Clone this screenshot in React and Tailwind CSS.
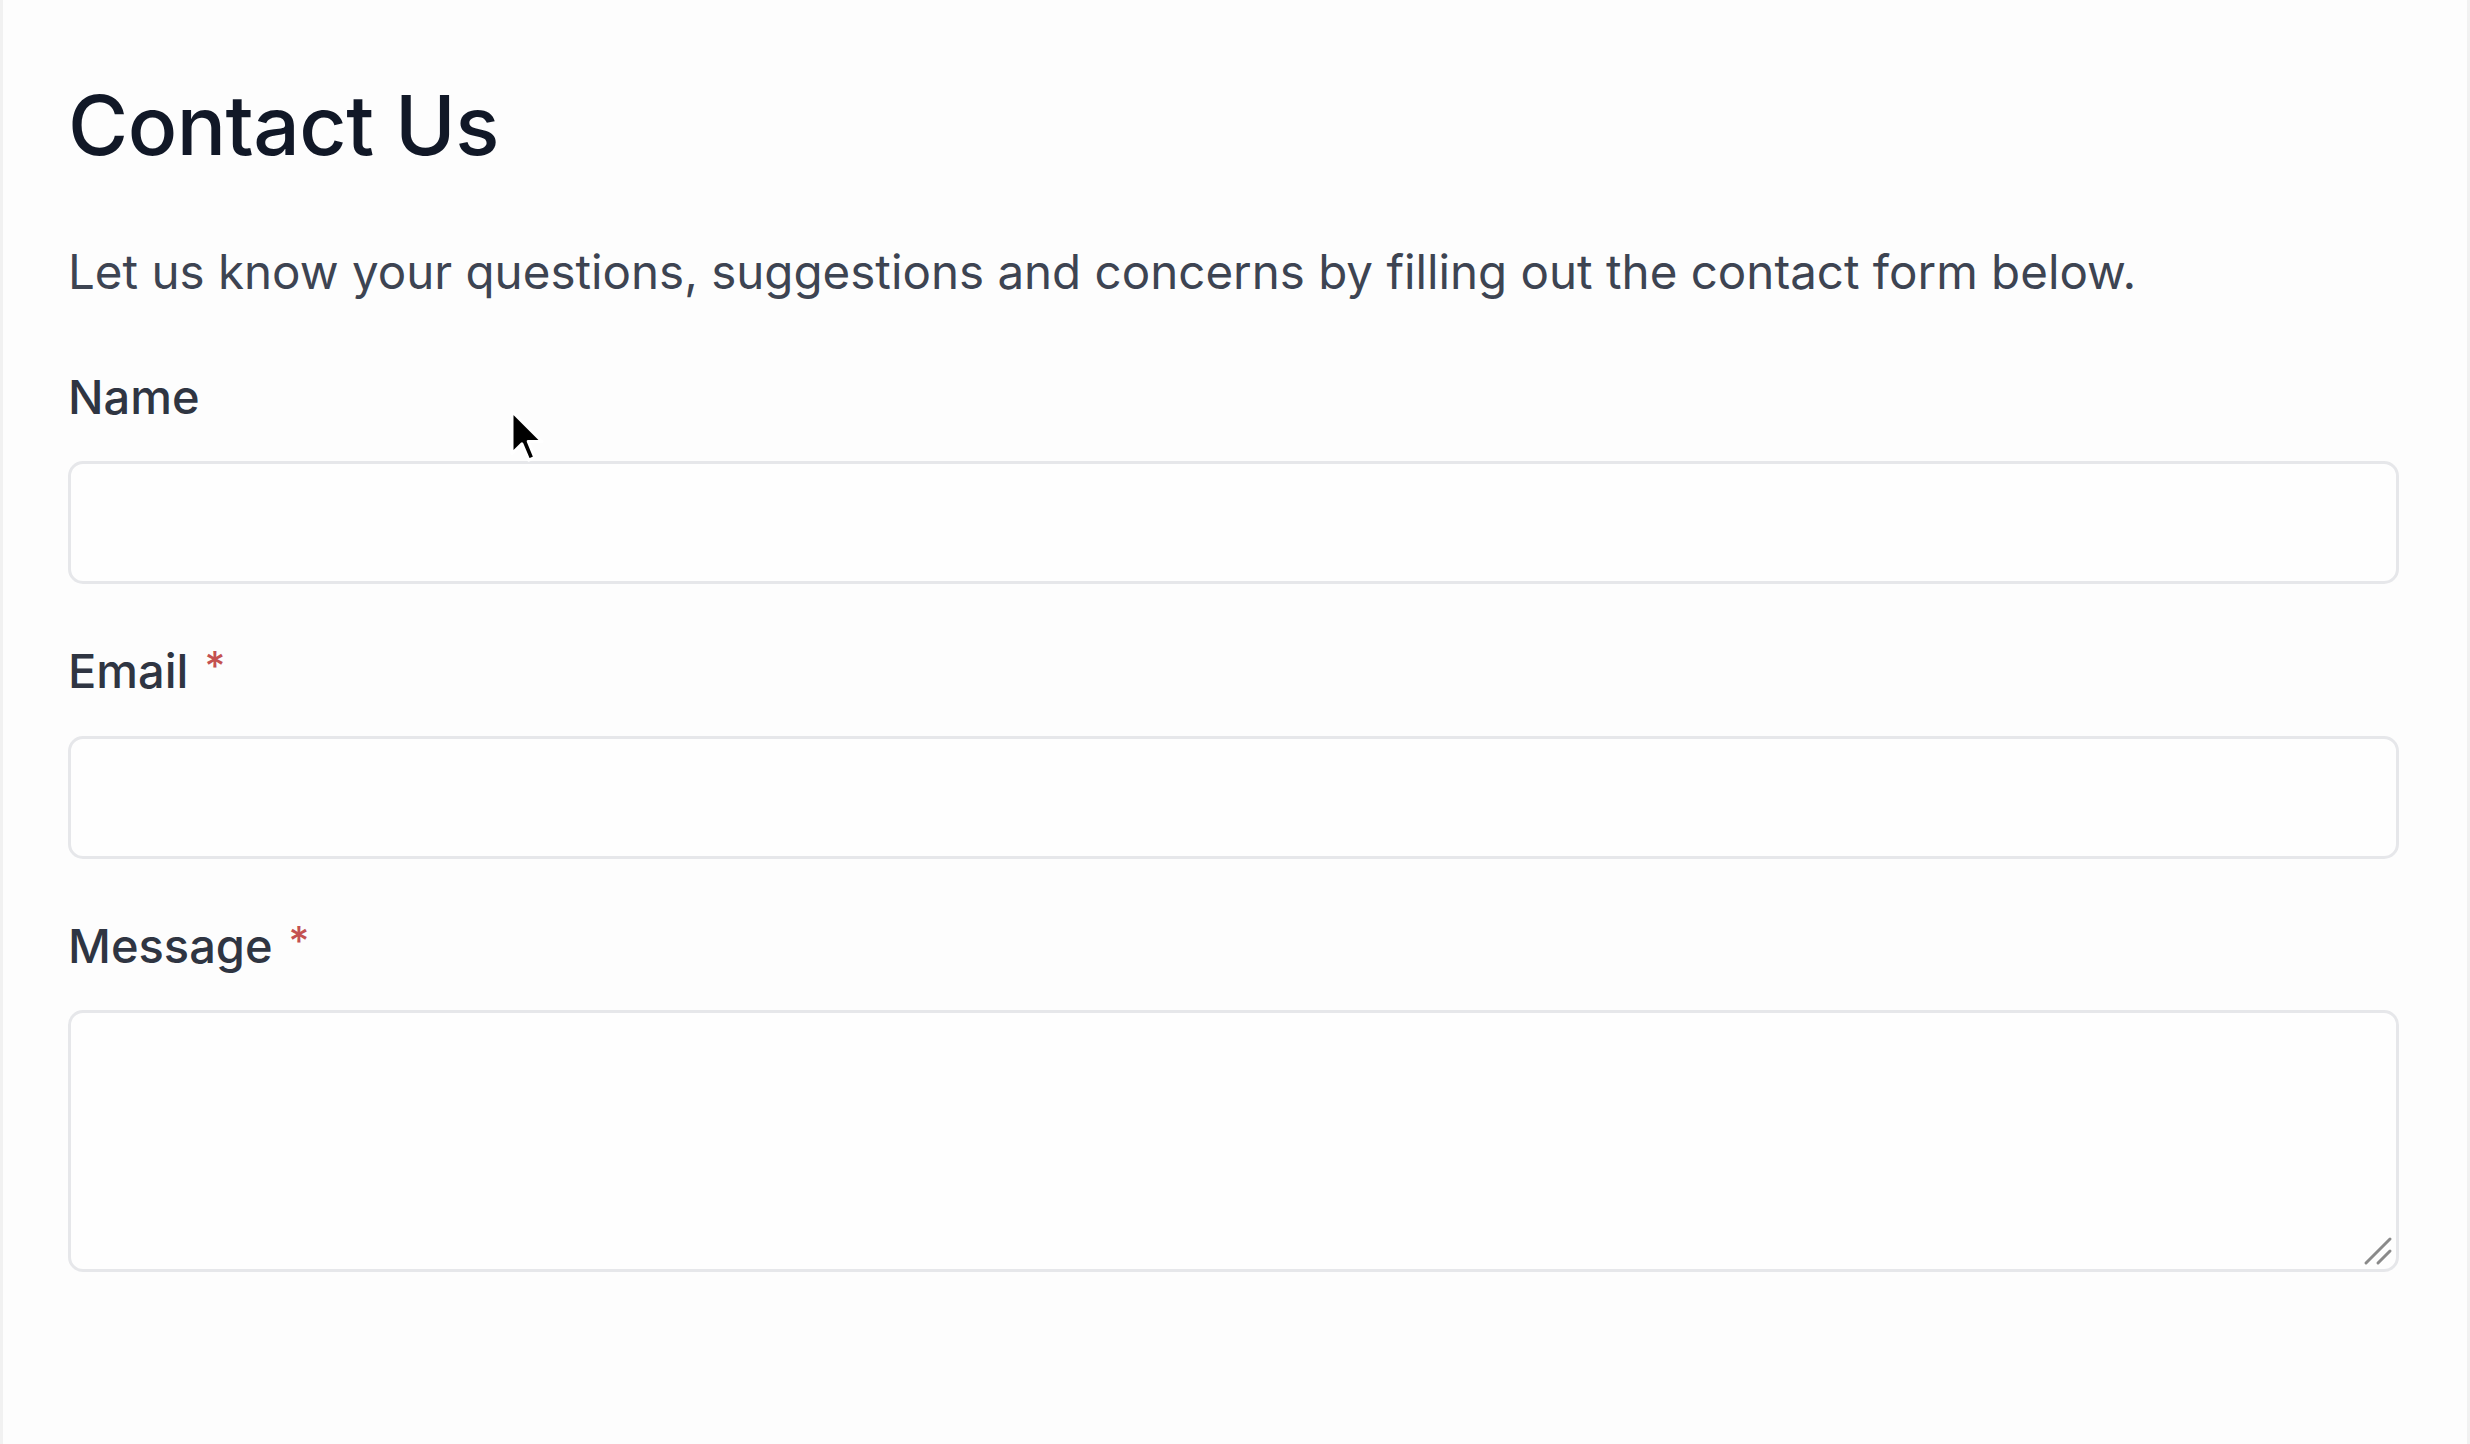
import React from 'react'

export default function App() {
  return (
    <div className="relative min-h-screen w-full bg-[#fdfdfd] border-l-[3px] border-r-[3px] border-[#f1f1f1] pl-[65px] pr-[68px] pt-[77px] font-['Inter',sans-serif]">
      <h1 className="text-[82px] font-medium leading-[1.2] tracking-[-0.5px] text-[#111827]">
        Contact Us
      </h1>
      <p className="mt-[61px] text-[47.5px] leading-[1.5] text-[#3d4452]">
        Let us know your questions, suggestions and concerns by filling out the contact form below.
      </p>

      <form className="mt-[54px] flex flex-col">
        <Field label="Name" />
        <Field label="Email" required />
        <Field label="Message" required textarea />
      </form>

      {/* mouse pointer */}
      <svg className="absolute left-[506px] top-[408px]" width="36" height="58" viewBox="0 0 12 19">
        <path d="M1 1 L1 15 L4.3 11.8 L6.6 17.2 L8.6 16.3 L6.4 11 L11 11 Z"
              fill="#000" stroke="#fff" strokeWidth="1" strokeLinejoin="round" />
      </svg>
    </div>
  )
}

function Field({ label, required, textarea }) {
  return (
    <div className="flex flex-col mb-[52px]">
      <label className="text-[47px] font-medium leading-[1.5] text-[#2f3542]">
        {label}
        {required && <span className="ml-[16px] text-[40px] align-top text-[#c45151]">*</span>}
      </label>
      {textarea ? (
        <div className="relative mt-[29px]">
          <textarea className="block w-full h-[262px] resize-none rounded-[15px] border-[3px] border-[#e6e7ea] bg-[#fefefe] outline-none" />
          <svg className="absolute right-[6px] bottom-[6px]" width="30" height="30" viewBox="0 0 30 30">
            <path d="M3 27 L27 3" stroke="#8a8a8a" strokeWidth="3" strokeLinecap="round" />
            <path d="M15 27 L27 15" stroke="#8a8a8a" strokeWidth="3" strokeLinecap="round" />
          </svg>
        </div>
      ) : (
        <input type="text" className="mt-[29px] block w-full h-[123px] rounded-[15px] border-[3px] border-[#e6e7ea] bg-[#fefefe] outline-none" />
      )}
    </div>
  )
}
